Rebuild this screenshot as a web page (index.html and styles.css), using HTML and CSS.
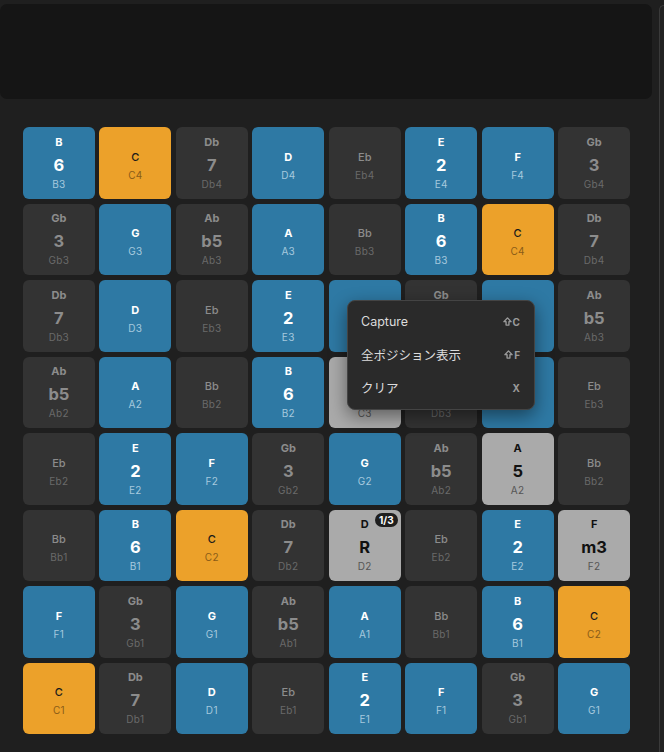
FILE: index.html
```html
<!DOCTYPE html>
<html lang="ja">
<head>
    <meta charset="UTF-8">
    <meta name="viewport" content="width=device-width, initial-scale=1.0">
    <title>Fretboard</title>
    <link rel="stylesheet" href="styles.css">
</head>
<body>
    <div class="layout">
        <div class="main">
            <div class="display"></div>
            <div class="board-wrap">
                <div class="board" id="board"></div>
                <div class="menu">
                    <div class="menu-item">
                        <span>Capture</span>
                        <span class="shortcut">
                            <svg viewBox="0 0 10 10" width="9" height="9"><path d="M5 1 L9 5.2 H6.6 V9 H3.4 V5.2 H1 Z" fill="none" stroke="#9a9a9a" stroke-width="1.5" stroke-linejoin="round"/></svg>C
                        </span>
                    </div>
                    <div class="menu-item">
                        <span>全ポジション表示</span>
                        <span class="shortcut">
                            <svg viewBox="0 0 10 10" width="9" height="9"><path d="M5 1 L9 5.2 H6.6 V9 H3.4 V5.2 H1 Z" fill="none" stroke="#9a9a9a" stroke-width="1.5" stroke-linejoin="round"/></svg>F
                        </span>
                    </div>
                    <div class="menu-item">
                        <span>クリア</span>
                        <span class="shortcut">X</span>
                    </div>
                </div>
            </div>
        </div>
        <div class="side"></div>
    </div>
    <script>
        // note, interval, octave label, kind
        const rows = [
            [['B','6','B3','blue'], ['C','','C4','root'], ['Db','7','Db4','off'], ['D','','D4','blue'], ['Eb','','Eb4','off'], ['E','2','E4','blue'], ['F','','F4','blue'], ['Gb','3','Gb4','off']],
            [['Gb','3','Gb3','off'], ['G','','G3','blue'], ['Ab','b5','Ab3','off'], ['A','','A3','blue'], ['Bb','','Bb3','off'], ['B','6','B3','blue'], ['C','','C4','root'], ['Db','7','Db4','off']],
            [['Db','7','Db3','off'], ['D','','D3','blue'], ['Eb','','Eb3','off'], ['E','2','E3','blue'], ['F','','F3','blue'], ['Gb','3','Gb3','off'], ['G','','G3','blue'], ['Ab','b5','Ab3','off']],
            [['Ab','b5','Ab2','off'], ['A','','A2','blue'], ['Bb','','Bb2','off'], ['B','6','B2','blue'], ['C','b7','C3','sel'], ['Db','7','Db3','off'], ['D','','D3','blue'], ['Eb','','Eb3','off']],
            [['Eb','','Eb2','off'], ['E','2','E2','blue'], ['F','','F2','blue'], ['Gb','3','Gb2','off'], ['G','','G2','blue'], ['Ab','b5','Ab2','off'], ['A','5','A2','sel'], ['Bb','','Bb2','off']],
            [['Bb','','Bb1','off'], ['B','6','B1','blue'], ['C','','C2','root'], ['Db','7','Db2','off'], ['D','R','D2','sel','1/3'], ['Eb','','Eb2','off'], ['E','2','E2','blue'], ['F','m3','F2','sel']],
            [['F','','F1','blue'], ['Gb','3','Gb1','off'], ['G','','G1','blue'], ['Ab','b5','Ab1','off'], ['A','','A1','blue'], ['Bb','','Bb1','off'], ['B','6','B1','blue'], ['C','','C2','root']],
            [['C','','C1','root'], ['Db','7','Db1','off'], ['D','','D1','blue'], ['Eb','','Eb1','off'], ['E','2','E1','blue'], ['F','','F1','blue'], ['Gb','3','Gb1','off'], ['G','','G1','blue']]
        ];

        const board = document.getElementById('board');
        rows.forEach(row => {
            row.forEach(([note, interval, octave, kind, badge]) => {
                const cell = document.createElement('div');
                cell.className = `cell ${kind}` + (interval ? ' has-interval' : '');
                let html = `<span class="note">${note}</span>`;
                if (interval) {
                    html += `<span class="interval">${interval}</span>`;
                }
                html += `<span class="octave">${octave}</span>`;
                if (badge) {
                    html += `<span class="badge">${badge}</span>`;
                }
                cell.innerHTML = html;
                board.appendChild(cell);
            });
        });
    </script>
</body>
</html>
```

FILE: styles.css
```css
body {
    margin: 0;
    background-color: #1f1f1f;
    font-family: Inter, "Noto Sans CJK JP", sans-serif;
    overflow: hidden;
}

.layout {
    display: flex;
    width: 664px;
    height: 752px;
}

.main {
    width: 652px;
    flex-shrink: 0;
}

.display {
    height: 95px;
    margin-top: 4px;
    background-color: #151515;
    border-radius: 7px;
}

.side {
    flex: 1;
    min-width: 0;
    margin: 5px 0 0 7px;
    border-top: 1px solid #3a3a3a;
    border-left: 1px solid #3a3a3a;
    border-top-left-radius: 9px;
    background-color: #222;
}

.board-wrap {
    position: relative;
    width: 607px;
    margin: 28px 0 0 23px;
}

.board {
    display: grid;
    grid-template-columns: repeat(8, 1fr);
    gap: 5px 4.7px;
}

/* Cells */
.cell {
    position: relative;
    height: 71.5px;
    border-radius: 6px;
    display: flex;
    flex-direction: column;
    align-items: center;
    justify-content: center;
    padding-top: 6px;
    box-sizing: border-box;
}

.cell.has-interval {
    padding-top: 0;
}

.note {
    font-size: 11px;
    line-height: 13px;
    font-weight: 700;
}

.interval {
    font-size: 16.5px;
    line-height: 20px;
    font-weight: 700;
    margin-top: 6px;
}

.octave {
    font-size: 10px;
    line-height: 12px;
    margin-top: 5px;
    letter-spacing: 0.3px;
}

.has-interval .octave {
    margin-top: 3px;
}

.blue {
    background-color: #2e79a4;
    color: #fff;
}

.blue .octave {
    color: #a6c9de;
}

.root {
    background-color: #eca12a;
    color: #1a1a1a;
}

.root .note {
    font-weight: 500;
}

.root .octave {
    color: #8a5c18;
}

.off {
    background-color: #333;
    color: #8c8c8c;
}

.off .note {
    font-weight: 500;
}

.off.has-interval .note {
    font-weight: 700;
}

.off .octave {
    color: #6a6a6a;
}

.sel {
    background-color: #aaa;
    color: #111;
}

.sel .octave {
    color: #555;
}

.badge {
    position: absolute;
    top: 3px;
    right: 3px;
    height: 14px;
    padding: 0 4px;
    border-radius: 7px;
    background-color: #1e1e1e;
    color: #fff;
    font-size: 10px;
    line-height: 14px;
    font-weight: 700;
}

/* Context menu */
.menu {
    position: absolute;
    left: 324px;
    top: 173px;
    width: 188px;
    padding: 4px 0 5px;
    box-sizing: border-box;
    background-color: #2a2a2a;
    border: 1px solid #444;
    border-radius: 8px;
    box-shadow: 0 6px 18px rgba(0, 0, 0, 0.45);
}

.menu-item {
    display: flex;
    justify-content: space-between;
    align-items: center;
    height: 33px;
    padding: 0 14px 0 13px;
    color: #dcdcdc;
    font-size: 12.5px;
}

.shortcut {
    display: flex;
    align-items: center;
    gap: 1px;
    color: #9a9a9a;
    font-size: 10px;
    font-weight: 700;
}
```
